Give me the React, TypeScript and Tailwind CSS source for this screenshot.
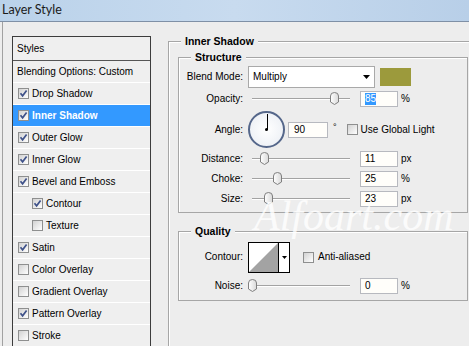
import React from 'react'

const styleItems = [
  { label: 'Drop Shadow', checked: true },
  { label: 'Inner Shadow', checked: true, selected: true },
  { label: 'Outer Glow', checked: true },
  { label: 'Inner Glow', checked: true },
  { label: 'Bevel and Emboss', checked: true },
  { label: 'Contour', checked: true, indent: true },
  { label: 'Texture', checked: false, indent: true },
  { label: 'Satin', checked: true },
  { label: 'Color Overlay', checked: false },
  { label: 'Gradient Overlay', checked: false },
  { label: 'Pattern Overlay', checked: true },
  { label: 'Stroke', checked: false },
]

function CheckBox({ checked }: { checked: boolean }) {
  return (
    <span className="flex h-[11px] w-[11px] shrink-0 items-center justify-center border border-[#8e8f8f] bg-linear-to-br from-[#d2d2d2] to-white">
      {checked && (
        <svg width="9" height="9" viewBox="0 0 9 9">
          <path d="M1.5 4.2 L3.6 6.8 L7.6 1.6" stroke="#3e5189" strokeWidth="1.7" fill="none" />
        </svg>
      )}
    </span>
  )
}

function Thumb() {
  return (
    <svg width="9" height="13" viewBox="0 0 9 13">
      <defs>
        <linearGradient id="th" x1="0" y1="0" x2="1" y2="0">
          <stop offset="0" stopColor="#ffffff" />
          <stop offset="1" stopColor="#d9d9d9" />
        </linearGradient>
      </defs>
      <path d="M0.5 4 Q0.5 0.5 4.5 0.5 Q8.5 0.5 8.5 4 L8.5 10 L4.5 12.5 L0.5 10 Z" fill="url(#th)" stroke="#7f7f7f" />
    </svg>
  )
}

function Slider({ pos }: { pos: number }) {
  return (
    <div className="relative flex h-[16px] w-[98px] items-center">
      <div className="h-[2px] w-full border-t border-b border-t-[#a3a3a3] border-b-white" />
      <div className="absolute top-[1px]" style={{ left: pos - 4 }}>
        <Thumb />
      </div>
    </div>
  )
}

function NumBox({ value, selected }: { value: string; selected?: boolean }) {
  return (
    <div className="flex h-[16px] w-[38px] items-center border border-[#b7b9bf] bg-[#fffefa] pl-[4px]">
      {selected ? <span className="bg-[#3399ff] text-white">{value}</span> : value}
    </div>
  )
}

function Row({ label, h, children }: { label: string; h: string; children: React.ReactNode }) {
  return (
    <div className={`flex items-center ${h}`}>
      <div className="w-[64px] shrink-0 text-right">{label}</div>
      {children}
    </div>
  )
}

function SliderRow({ label, pos, value, unit }: { label: string; pos: number; value: string; unit: string }) {
  return (
    <Row label={label} h="h-[20px]">
      <div className="ml-[9px]">
        <Slider pos={pos} />
      </div>
      <div className="ml-[10px]">
        <NumBox value={value} />
      </div>
      <span className="ml-[3px]">{unit}</span>
    </Row>
  )
}

export default function App() {
  return (
    <div className="relative h-[346px] w-[469px] overflow-hidden bg-[#ededed] font-['Liberation_Sans',Arial,sans-serif] text-[10px] leading-[12px] text-black">
      {/* title bar */}
      <div className="h-[22px] border-b border-[#7f90a6] bg-linear-to-r from-[#bad2ea] via-[#c8dbef] to-[#b8cfe8] pl-[2px] pt-[2px] font-['Lato',sans-serif] text-[12.5px] leading-[16px] text-[#1b1b1b]">
        Layer Style
      </div>

      <div className="flex">
        {/* styles list */}
        <div className="flex h-[324px] w-[168px] shrink-0 pl-[2px]">
          <div className="flex-1 border-l border-[#a1a1a1] pl-[9px] pt-[14px]">
            <div className="w-[139px] border border-[#3c3c3c] bg-[#efefef]">
              <div className="flex h-[24px] items-center border-b border-[#555] pl-[4px]">Styles</div>
              <div className="flex h-[22px] items-center border-b border-white pl-[4px]">Blending Options: Custom</div>
              {styleItems.map((item) => (
                <div
                  key={item.label}
                  className={`flex h-[22px] items-center border-b border-white ${item.indent ? 'pl-[19px]' : 'pl-[5px]'} ${item.selected ? 'bg-[#3399ff] font-bold text-white' : ''}`}
                >
                  <CheckBox checked={item.checked} />
                  <span className="ml-[3px]">{item.label}</span>
                </div>
              ))}
            </div>
          </div>
        </div>

        {/* inner shadow panel */}
        <fieldset className="mt-[12px] h-[330px] w-[320px] shrink-0 border border-[#a6a6a6] pl-[9px] shadow-[inset_1px_1px_0_#fff]">
          <legend className="ml-[3px] bg-[#ededed] px-[4px] text-[10.5px] leading-[14px] font-bold">Inner Shadow</legend>

          <fieldset className="mt-[2px] w-[290px] border border-[#a6a6a6] pb-[3px] shadow-[inset_1px_1px_0_#fff]">
            <legend className="ml-[12px] bg-[#ededed] px-[4px] text-[10.5px] leading-[14px] font-bold">Structure</legend>
            <div className="pt-[2px]">
              <Row label="Blend Mode:" h="h-[22px]">
                <div className="ml-[5px] flex h-[22px] w-[127px] items-center justify-between border border-[#a9a9a9] bg-white pl-[4px] pr-[4px]">
                  <span>Multiply</span>
                  <svg width="7" height="4" viewBox="0 0 7 4">
                    <path d="M0 0 H7 L3.5 4 Z" fill="#000" />
                  </svg>
                </div>
                <div className="ml-[5px] h-[18px] w-[31px] bg-[#9c9a3c]" />
              </Row>
              <Row label="Opacity:" h="h-[22px]">
                <div className="ml-[9px]">
                  <Slider pos={82} />
                </div>
                <div className="ml-[10px]">
                  <NumBox value="85" selected />
                </div>
                <span className="ml-[3px]">%</span>
              </Row>
              <Row label="Angle:" h="h-[39px]">
                <div className="relative ml-[5px] flex h-[37px] w-[37px] items-center justify-center rounded-full border-2 border-[#55678a] bg-radial from-white to-[#e9edf3]">
                  <div className="absolute left-[16.5px] top-[1px] h-[16px] w-[1.5px] bg-black" />
                  <div className="h-[3px] w-[3px] rounded-full bg-black" />
                </div>
                <div className="ml-[3px] flex h-[16px] w-[40px] items-center border border-[#b7b9bf] bg-[#fffefa] pl-[5px]">90</div>
                <span className="ml-[5px] self-start pt-[11px] text-[9px]">°</span>
                <div className="ml-[10px]">
                  <CheckBox checked={false} />
                </div>
                <span className="ml-[3px]">Use Global Light</span>
              </Row>
              <SliderRow label="Distance:" pos={12} value="11" unit="px" />
              <SliderRow label="Choke:" pos={25} value="25" unit="%" />
              <SliderRow label="Size:" pos={16} value="23" unit="px" />
            </div>
          </fieldset>

          <fieldset className="mt-[11px] w-[290px] border border-[#a6a6a6] pb-[4px] shadow-[inset_1px_1px_0_#fff]">
            <legend className="ml-[12px] bg-[#ededed] px-[4px] text-[10.5px] leading-[14px] font-bold">Quality</legend>
            <div className="pt-[2px]">
              <Row label="Contour:" h="h-[34px]">
                <div className="ml-[5px] flex h-[31px] border border-black bg-white">
                  <svg width="29" height="29" viewBox="0 0 29 29" className="block">
                    <path d="M0 29 L29 0 L29 29 Z" fill="#a3a3a3" />
                  </svg>
                  <div className="flex w-[11px] items-center justify-center border-l border-black">
                    <svg width="5" height="3" viewBox="0 0 5 3">
                      <path d="M0 0 H5 L2.5 3 Z" fill="#000" />
                    </svg>
                  </div>
                </div>
                <div className="ml-[13px]">
                  <CheckBox checked={false} />
                </div>
                <span className="ml-[4px]">Anti-aliased</span>
              </Row>
              <div className="mt-[2px]">
                <SliderRow label="Noise:" pos={0} value="0" unit="%" />
              </div>
            </div>
          </fieldset>
        </fieldset>
      </div>

      {/* watermark */}
      <div className="absolute left-[254px] top-[195px] font-['Liberation_Serif',serif] text-[42px] italic leading-none text-white opacity-80">
        Alfoart.com
      </div>
    </div>
  )
}
